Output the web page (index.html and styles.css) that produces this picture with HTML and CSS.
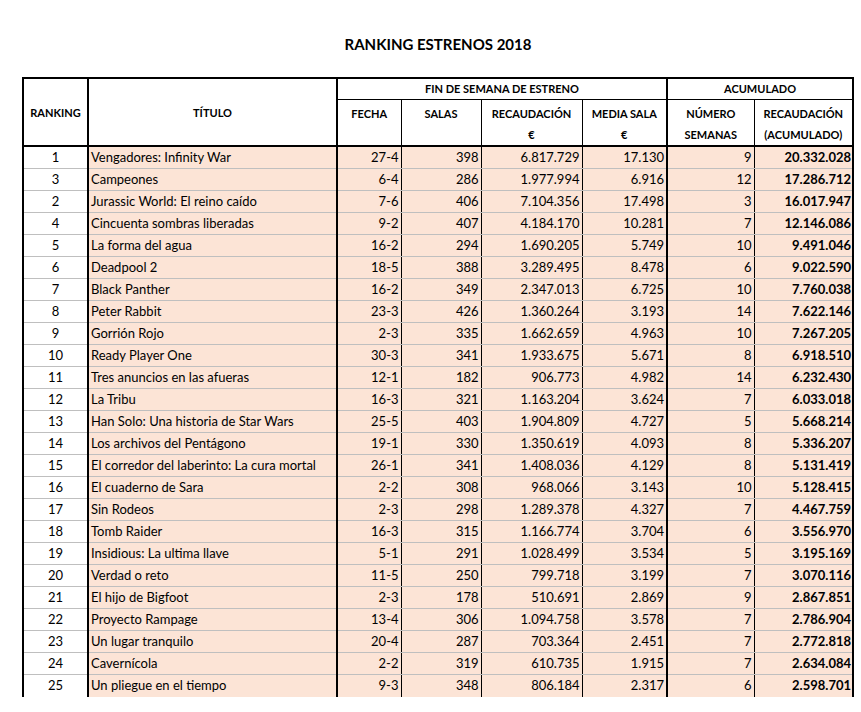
FILE: index.html
```html
<!DOCTYPE html>
<html lang="es">
<head>
<meta charset="utf-8">
<title>Ranking Estrenos 2018</title>
<link rel="stylesheet" href="styles.css">
</head>
<body>
<div class="page">
  <h1 class="title">RANKING ESTRENOS 2018</h1>
  <table class="ranking">
    <colgroup>
      <col class="w-rank"><col class="w-title"><col class="w-fecha"><col class="w-salas"><col class="w-rec"><col class="w-media"><col class="w-num"><col class="w-acum">
    </colgroup>
    <thead>
      <tr class="h1">
        <th rowspan="2" class="hc-rank">RANKING</th>
        <th rowspan="2" class="hc-title">TÍTULO</th>
        <th colspan="4" class="group thick-r">FIN DE SEMANA DE ESTRENO</th>
        <th colspan="2" class="group">ACUMULADO</th>
      </tr>
      <tr class="h2">
        <th class="sub">FECHA<br>&nbsp;</th>
        <th class="sub">SALAS<br>&nbsp;</th>
        <th class="sub">RECAUDACIÓN<br>€</th>
        <th class="sub thick-r">MEDIA SALA<br>€</th>
        <th class="sub">NÚMERO<br>SEMANAS</th>
        <th class="sub">RECAUDACIÓN<br>(ACUMULADO)</th>
      </tr>
    </thead>
    <tbody>
      <tr><td>1</td><td>Vengadores: Infinity War</td><td>27-4</td><td>398</td><td>6.817.729</td><td>17.130</td><td>9</td><td>20.332.028</td></tr>
      <tr><td>3</td><td>Campeones</td><td>6-4</td><td>286</td><td>1.977.994</td><td>6.916</td><td>12</td><td>17.286.712</td></tr>
      <tr><td>2</td><td>Jurassic World: El reino caído</td><td>7-6</td><td>406</td><td>7.104.356</td><td>17.498</td><td>3</td><td>16.017.947</td></tr>
      <tr><td>4</td><td>Cincuenta sombras liberadas</td><td>9-2</td><td>407</td><td>4.184.170</td><td>10.281</td><td>7</td><td>12.146.086</td></tr>
      <tr><td>5</td><td>La forma del agua</td><td>16-2</td><td>294</td><td>1.690.205</td><td>5.749</td><td>10</td><td>9.491.046</td></tr>
      <tr><td>6</td><td>Deadpool 2</td><td>18-5</td><td>388</td><td>3.289.495</td><td>8.478</td><td>6</td><td>9.022.590</td></tr>
      <tr><td>7</td><td>Black Panther</td><td>16-2</td><td>349</td><td>2.347.013</td><td>6.725</td><td>10</td><td>7.760.038</td></tr>
      <tr><td>8</td><td>Peter Rabbit</td><td>23-3</td><td>426</td><td>1.360.264</td><td>3.193</td><td>14</td><td>7.622.146</td></tr>
      <tr><td>9</td><td>Gorrión Rojo</td><td>2-3</td><td>335</td><td>1.662.659</td><td>4.963</td><td>10</td><td>7.267.205</td></tr>
      <tr><td>10</td><td>Ready Player One</td><td>30-3</td><td>341</td><td>1.933.675</td><td>5.671</td><td>8</td><td>6.918.510</td></tr>
      <tr><td>11</td><td>Tres anuncios en las afueras</td><td>12-1</td><td>182</td><td>906.773</td><td>4.982</td><td>14</td><td>6.232.430</td></tr>
      <tr><td>12</td><td>La Tribu</td><td>16-3</td><td>321</td><td>1.163.204</td><td>3.624</td><td>7</td><td>6.033.018</td></tr>
      <tr><td>13</td><td>Han Solo: Una historia de Star Wars</td><td>25-5</td><td>403</td><td>1.904.809</td><td>4.727</td><td>5</td><td>5.668.214</td></tr>
      <tr><td>14</td><td>Los archivos del Pentágono</td><td>19-1</td><td>330</td><td>1.350.619</td><td>4.093</td><td>8</td><td>5.336.207</td></tr>
      <tr><td>15</td><td>El corredor del laberinto: La cura mortal</td><td>26-1</td><td>341</td><td>1.408.036</td><td>4.129</td><td>8</td><td>5.131.419</td></tr>
      <tr><td>16</td><td>El cuaderno de Sara</td><td>2-2</td><td>308</td><td>968.066</td><td>3.143</td><td>10</td><td>5.128.415</td></tr>
      <tr><td>17</td><td>Sin Rodeos</td><td>2-3</td><td>298</td><td>1.289.378</td><td>4.327</td><td>7</td><td>4.467.759</td></tr>
      <tr><td>18</td><td>Tomb Raider</td><td>16-3</td><td>315</td><td>1.166.774</td><td>3.704</td><td>6</td><td>3.556.970</td></tr>
      <tr><td>19</td><td>Insidious: La ultima llave</td><td>5-1</td><td>291</td><td>1.028.499</td><td>3.534</td><td>5</td><td>3.195.169</td></tr>
      <tr><td>20</td><td>Verdad o reto</td><td>11-5</td><td>250</td><td>799.718</td><td>3.199</td><td>7</td><td>3.070.116</td></tr>
      <tr><td>21</td><td>El hijo de Bigfoot</td><td>2-3</td><td>178</td><td>510.691</td><td>2.869</td><td>9</td><td>2.867.851</td></tr>
      <tr><td>22</td><td>Proyecto Rampage</td><td>13-4</td><td>306</td><td>1.094.758</td><td>3.578</td><td>7</td><td>2.786.904</td></tr>
      <tr><td>23</td><td>Un lugar tranquilo</td><td>20-4</td><td>287</td><td>703.364</td><td>2.451</td><td>7</td><td>2.772.818</td></tr>
      <tr><td>24</td><td>Cavernícola</td><td>2-2</td><td>319</td><td>610.735</td><td>1.915</td><td>7</td><td>2.634.084</td></tr>
      <tr><td>25</td><td>Un pliegue en el tiempo</td><td>9-3</td><td>348</td><td>806.184</td><td>2.317</td><td>6</td><td>2.598.701</td></tr>
    </tbody>
  </table>
</div>
</body>
</html>
```
FILE: styles.css
```css
html, body {
  margin: 0;
  padding: 0;
  background: #ffffff;
  overflow: hidden;
}

body {
  font-family: Lato, "Open Sans", "Liberation Sans", sans-serif;
  font-size: 13px;
  color: #000000;
}

.page {
  width: 832px;
  margin-left: 22px;
}

.title {
  margin: 0;
  padding-top: 34px;
  height: 77px;
  box-sizing: border-box;
  line-height: 20px;
  font-size: 15px;
  font-weight: 700;
  text-align: center;
}

.ranking {
  width: 832px;
  table-layout: fixed;
  border-collapse: collapse;
  border-top: 2px solid #000;
  border-left: 2px solid #000;
  border-right: 2px solid #000;
}

.w-rank { width: 65px; }
.w-title { width: 249px; }
.w-fecha { width: 64px; }
.w-salas { width: 80px; }
.w-rec { width: 101px; }
.w-media { width: 85px; }
.w-num { width: 87px; }
.w-acum { width: 99px; }

.ranking th {
  font-weight: 700;
  font-size: 11px;
  padding: 0;
  text-align: center;
  white-space: nowrap;
}

.h1 { height: 21px; }
.h2 { height: 45px; }

.hc-rank, .hc-title {
  vertical-align: middle;
  border-right: 2px solid #000;
  border-bottom: 2px solid #000;
}

.group {
  border-bottom: 1px solid #000;
  vertical-align: middle;
  line-height: 20px;
}

.thick-r { border-right: 2px solid #000; }

.sub {
  vertical-align: top;
  line-height: 21px;
  padding-top: 3px !important;
  border-right: 1px solid #000;
  border-bottom: 2px solid #000;
}

.sub.thick-r { border-right: 2px solid #000; }

.ranking tbody tr { height: 22px; }

.ranking td {
  padding: 0 2px;
  line-height: 21px;
  white-space: nowrap;
  overflow: hidden;
  background: #fce4d6;
  text-align: right;
  border-bottom: 1px solid #bfbfbf;
  border-right: 1px solid #000;
}

.ranking tbody tr:last-child td { border-bottom: none; }

.ranking td:nth-child(1) {
  background: #ffffff;
  text-align: center;
  border-right: 2px solid #000;
}

.ranking td:nth-child(2) {
  text-align: left;
  border-right: 2px solid #000;
}

.ranking td:nth-child(6) { border-right: 2px solid #000; }

.ranking td:nth-child(8) {
  font-weight: 700;
  padding-right: 1px;
}
```
